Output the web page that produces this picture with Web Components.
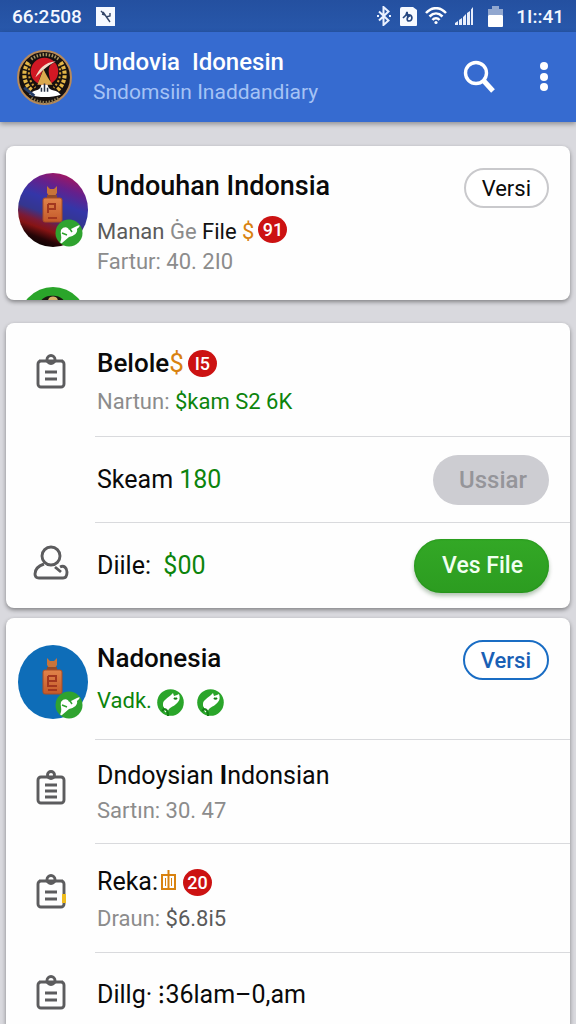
<!DOCTYPE html>
<html lang="id">
<head>
    <meta charset="UTF-8">
    <meta name="viewport" content="width=device-width, initial-scale=1.0">
    <title>Undovia Idonesin</title>
    <style>
        body {
            margin: 0;
            min-height: 100vh;
            display: flex;
            flex-direction: column;
            background: #d9d9de;
            color: #0a0a0a;
            font-family: Roboto, "Liberation Sans", sans-serif;
        }
        main {
            flex: 1;
            display: flex;
            flex-direction: column;
            padding: 24px 6px 0;
        }
        .first { margin-bottom: 23px; }
        .second { margin-bottom: 10px; }
        .last { flex: 1; }
        .gray { color: #8c8c8c; }
        .mid { color: #5a5a5a; }
        .dark { color: #111; }
        .green { color: #0c840c; }
        .orange { color: #d9820f; font-weight: 400; }
    </style>
</head>
<body>
    <status-bar></status-bar>
    <app-header>
        <span slot="title">Undovia&nbsp; Idonesin</span>
        <span slot="subtitle">Sndomsiin Inaddandiary</span>
    </app-header>

    <main>
        <file-card class="first">
            <file-row size="head" tall>
                <round-avatar slot="lead" tone="dusk"></round-avatar>
                <peek-avatar slot="lead"></peek-avatar>
                <span slot="title">Undouhan Indonsia</span>
                <span slot="sub"><span class="mid">Manan</span> <span class="gray">Ġe</span> <span class="dark">File</span> <span class="orange">$</span><count-badge>91</count-badge></span>
                <span slot="sub" class="gray">Fartur: 40. 2I0</span>
                <pill-button slot="action">Versi</pill-button>
            </file-row>
        </file-card>

        <file-card class="second">
            <file-row size="large" strong>
                <line-icon slot="lead" name="clipboard"></line-icon>
                <span slot="title">Belole<span class="orange">$</span><count-badge>I5</count-badge></span>
                <span slot="sub"><span class="gray">Nartun:</span> <span class="green">$kam S2 6K</span></span>
            </file-row>
            <file-row size="single">
                <span slot="title">Skeam <span class="green">180</span></span>
                <pill-button slot="action" kind="muted">Ussiar</pill-button>
            </file-row>
            <file-row size="single">
                <line-icon slot="lead" name="person"></line-icon>
                <span slot="title">Diile:&nbsp; <span class="green">$00</span></span>
                <pill-button slot="action" kind="green">Ves File</pill-button>
            </file-row>
        </file-card>

        <file-card class="last" open-ended>
            <file-row size="head">
                <round-avatar slot="lead" tone="blue"></round-avatar>
                <span slot="title">Nadonesia</span>
                <span slot="sub" class="green">Vadk. <leaf-mark></leaf-mark> <leaf-mark></leaf-mark></span>
                <pill-button slot="action" kind="blue">Versi</pill-button>
            </file-row>
            <file-row size="small">
                <line-icon slot="lead" name="clipboard-full"></line-icon>
                <span slot="title">Dndoysian <b>I</b>ndonsian</span>
                <span slot="sub" class="gray">Sartın: 30. 47</span>
            </file-row>
            <file-row size="medium">
                <line-icon slot="lead" name="clipboard-tag"></line-icon>
                <span slot="title">Reka:<gift-mark></gift-mark><count-badge>20</count-badge></span>
                <span slot="sub"><span class="gray">Draun:</span> <span class="mid">$6.8i5</span></span>
            </file-row>
            <file-row size="end">
                <line-icon slot="lead" name="clipboard"></line-icon>
                <span slot="title">Dillg· ⁝36lam–0,am</span>
            </file-row>
        </file-card>
    </main>

    <!-- Status bar -->
    <template id="status-bar-template">
        <style>
            :host {
                display: flex;
                align-items: center;
                height: 32px;
                padding: 0 12px;
                background: linear-gradient(#2450a0, #2858ab);
                color: #f4f8ff;
                font-size: 19px;
                font-weight: 500;
            }
            svg { display: block; }
            .note { margin-left: 14px; }
            .tray {
                display: flex;
                align-items: center;
                gap: 7px;
                margin-left: auto;
            }
        </style>
        <span>66:2508</span>
        <svg class="note" width="19" height="19" viewBox="0 0 19 19">
            <rect width="19" height="19" fill="#f6f9ff"/>
            <path d="M5 4l2 2M7 5l7 10M6 7l3 1M10 10l4-1v-3" stroke="#334567" stroke-width="1.400" fill="none"/>
        </svg>
        <div class="tray">
            <svg width="16" height="20" viewBox="0 0 16 20" fill="none" stroke="#eaf1ff" stroke-width="2">
                <path d="M3 5.500l9.500 9L7.500 19V1l5 4.500L3 14.500M1 10h2M13 10h2"/>
            </svg>
            <svg width="19" height="19" viewBox="0 0 19 19">
                <path d="M3 0h11l4 3v15a1 1 0 0 1-1 1H2a1 1 0 0 1-1-1V2a2 2 0 0 1 2-2z" fill="#f6f9ff"/>
                <path d="M4 11l3-3 1-3 1 6M9 8c5-1 5 6 1 6-3 0-2-5 1-5" stroke="#24457f" stroke-width="1.700" fill="none"/>
            </svg>
            <svg width="22" height="18" viewBox="0 0 22 18" fill="none" stroke="#fff" stroke-width="2.500">
                <path d="M1 6C7-.500 15-.500 21 6M4.500 9.500c4-4 9-4 13 0M7.500 13c2-2.500 5-2.500 7 0"/>
                <circle cx="11" cy="15.500" r="1.600" fill="#fff" stroke="none"/>
            </svg>
            <svg width="20" height="18" viewBox="0 0 20 18" fill="#e9eefb">
                <path d="M1 18v-2l3-2v4zM5 18v-5l3-2v7zM9 18v-8l3-3v11zM13 18V6l3-2v14zM17 18V2.500L19 0v18z"/>
            </svg>
            <svg width="28" height="21" viewBox="0 0 28 21">
                <path d="M11 0h7v3h4v6H7V3h4z" fill="#91a7cf"/>
                <rect x="7" y="9" width="15" height="12" rx="1" fill="#fff"/>
            </svg>
            <span>1I::41</span>
        </div>
    </template>

    <!-- App header -->
    <template id="app-header-template">
        <style>
            :host {
                display: flex;
                align-items: center;
                height: 90px;
                padding: 0 17px;
                background: #366bd0;
                box-shadow: 0 2px 5px rgba(0, 0, 0, .35);
            }
            .names {
                flex: 1;
                padding-left: 21px;
            }
            h1, p { margin: 0; line-height: 30px; }
            h1 { color: #fff; font-size: 24px; font-weight: 500; }
            p { color: #a5c3f5; font-size: 21px; }
            button {
                display: flex;
                padding: 0;
                border: 0;
                background: none;
            }
            .more { margin-left: 41px; padding-right: 8px; }
        </style>
        <svg width="55" height="57" viewBox="0 0 54 56">
            <circle cx="27" cy="28" r="26" fill="#17110f" stroke="#b98a58" stroke-width="2"/>
            <path d="M14 10C22 4 33 4 41 10" fill="none" stroke="#a99561" stroke-width="3" stroke-dasharray="1.500 1.500"/>
            <path d="M14 48C22 54 33 54 41 48" fill="none" stroke="#8c7a52" stroke-width="3" stroke-dasharray="1.500 1.500"/>
            <circle cx="27" cy="22" r="13.500" fill="#d11824"/>
            <path d="M17 27C24 22 25 13 38 13 30 15 30 21 33 32L21 32 26 19z" fill="#17110f"/>
            <path d="M38 12C27 13 21 20 18 28 24 22 29 17 38 12z" fill="#f3ddc8"/>
            <path d="M26 20l-6 15h15C31 30 29 26 26 20z" fill="#dba94e"/>
            <g fill="none" stroke="#e4b748" stroke-width="4" stroke-dasharray="3 1.500">
                <path d="M11 13C5 22 6 34 15 41"/>
                <path d="M43 13C49 22 48 34 39 41"/>
            </g>
            <path d="M13 15C10 24 12 32 18 38M41 15C44 24 42 32 36 38" fill="none" stroke="#d39b34" stroke-width="2" stroke-dasharray="2 2"/>
            <path d="M12 45C17 38 22 43 24 35h6c2 8 8 3 13 10-9 3-22 3-31 0z" fill="#fff"/>
            <path d="M27 34v8M24 38v4M30 38v4" stroke="#283245" stroke-width="1.500"/>
            <path d="M7 38l10 8" stroke="#253c66" stroke-width="3"/>
        </svg>
        <div class="names">
            <h1><slot name="title"></slot></h1>
            <p><slot name="subtitle"></slot></p>
        </div>
        <button aria-label="Cari">
            <svg width="33" height="34" viewBox="0 0 33 34" fill="none" stroke="#fff">
                <circle cx="13" cy="13" r="10.500" stroke-width="3.400"/>
                <path d="M20 20l10 11" stroke-width="5"/>
            </svg>
        </button>
        <button class="more" aria-label="Menu">
            <svg width="14" height="30" viewBox="0 0 14 30" fill="#fff">
                <circle cx="7" cy="4" r="4"/><circle cx="7" cy="15" r="4"/><circle cx="7" cy="25" r="4"/>
            </svg>
        </button>
    </template>

    <!-- Card -->
    <template id="file-card-template">
        <style>
            :host {
                display: block;
                overflow: hidden;
                border-radius: 8px;
                background: #fefefe;
                box-shadow: 0 2px 4px rgba(0, 0, 0, .4);
            }
            :host([open-ended]) { border-radius: 8px 8px 0 0; }
        </style>
        <slot></slot>
    </template>

    <!-- Row inside a card -->
    <template id="file-row-template">
        <style>
            :host {
                --top: 20px;
                --gap: 4px;
                --bottom: 18px;
                display: flex;
            }
            :host([size="small"]) { --top: 18px; --gap: 2px; --bottom: 17px; }
            :host([size="large"]) { --top: 22px; --gap: 6px; --bottom: 19px; }
            :host([size="head"]) { --top: 22px; --gap: 10px; --bottom: 23px; }
            :host([size="head"][tall]) { --gap: 12px; }
            :host([size="single"]) { --top: 25px; --bottom: 24px; }
            :host([size="end"]) { --top: 24px; --bottom: 12px; }
            .lead {
                width: 89px;
                flex: none;
                display: flex;
                flex-direction: column;
                align-items: center;
                padding-top: 31px;
                box-sizing: border-box;
            }
            :host([size="head"]) .lead {
                padding: 27px 0 0 4px;
                justify-content: space-between;
            }
            :host([size="single"]) .lead,
            :host([size="end"]) .lead { padding-top: 23px; }
            .body {
                flex: 1;
                display: flex;
                padding: 0 21px 0 2px;
                border-top: 1px solid #d9dadd;
            }
            :host(:first-child) .body { border-top: 0; }
            .text {
                flex: 1;
                padding: var(--top) 0 var(--bottom);
            }
            .title {
                margin: 0;
                font-size: 25px;
                font-weight: 400;
                line-height: 36px;
            }
            :host([size="head"]) .title,
            :host([strong]) .title { font-size: 26px; font-weight: 500; }
            :host([size="head"][tall]) .title { font-size: 27px; }
            .sub {
                display: flex;
                flex-direction: column;
                margin-top: var(--gap);
                font-size: 22px;
                line-height: 30px;
            }
            :host([size="single"]) .sub,
            :host([size="end"]) .sub { display: none; }
            .action { display: flex; align-items: center; }
            :host([size="head"]) .action {
                align-items: flex-start;
                padding-top: 22px;
            }
        </style>
        <div class="lead"><slot name="lead"></slot></div>
        <div class="body">
            <div class="text">
                <h2 class="title"><slot name="title"></slot></h2>
                <div class="sub"><slot name="sub"></slot></div>
            </div>
            <div class="action"><slot name="action"></slot></div>
        </div>
    </template>

    <!-- Pill button -->
    <template id="pill-button-template">
        <style>
            :host { display: block; }
            button {
                display: block;
                height: 40px;
                padding: 0 16px;
                border: 2px solid #c9c9cc;
                border-radius: 27px;
                background: #fff;
                color: #0a0a0a;
                font: 400 22px Roboto, "Liberation Sans", sans-serif;
            }
            :host([kind="blue"]) button {
                border-color: #1a6dc4;
                color: #1960b5;
                font-weight: 500;
            }
            :host([kind="muted"]) button {
                height: 50px;
                padding: 0 22px 0 26px;
                border: 0;
                background: #cdcdd2;
                color: #95959a;
                font-size: 24px;
                font-weight: 500;
            }
            :host([kind="green"]) button {
                height: 54px;
                padding: 0 26px 0 28px;
                border: 0;
                background: linear-gradient(#33a826, #2c9c20);
                box-shadow: inset 0 0 2px #17800f, 0 3px 4px rgba(0, 60, 0, .3);
                color: #f1fff0;
                font-size: 23px;
                font-weight: 500;
            }
        </style>
        <button><slot></slot></button>
    </template>

    <!-- Red counter -->
    <template id="count-badge-template">
        <style>
            :host {
                display: inline-flex;
                align-items: center;
                justify-content: center;
                width: 29px;
                height: 27px;
                margin-left: 4px;
                border-radius: 50%;
                background: #cc1212;
                color: #fff;
                font-size: 18px;
                font-weight: 500;
                line-height: 27px;
                vertical-align: bottom;
                margin-bottom: 4px;
            }
        </style>
        <slot></slot>
    </template>

    <!-- Avatar with a bottle and a small green badge -->
    <template id="round-avatar-template">
        <style>
            :host { display: block; height: 74px; }
            svg { display: block; }
            .dusk, :host([tone="dusk"]) .blue { display: none; }
            :host([tone="dusk"]) .dusk { display: inline; }
        </style>
        <svg width="70" height="74" viewBox="0 0 70 74">
            <defs>
                <linearGradient id="sky" x1=".700" y1="0" x2=".350" y2="1">
                    <stop offset="0" stop-color="#a8155c"/>
                    <stop offset=".200" stop-color="#65208c"/>
                    <stop offset=".400" stop-color="#3436a8"/>
                    <stop offset=".580" stop-color="#34368f"/>
                    <stop offset=".700" stop-color="#7c1a35"/>
                    <stop offset=".780" stop-color="#861414"/>
                    <stop offset=".900" stop-color="#260507"/>
                    <stop offset="1" stop-color="#0a0203"/>
                </linearGradient>
                <linearGradient id="clay" x1="0" y1="0" x2="0" y2="1">
                    <stop offset="0" stop-color="#e0834a"/>
                    <stop offset="1" stop-color="#c45a2a"/>
                </linearGradient>
            </defs>
            <ellipse class="dusk" cx="35" cy="37" rx="35" ry="37" fill="url(#sky)"/>
            <ellipse class="blue" cx="35" cy="37" rx="35" ry="37" fill="#0e6db8"/>
            <path d="M29 13l3 3h4l3-3v7l-2 3H31l-2-3z" fill="#c8743a"/>
            <rect x="29" y="22" width="10" height="3" fill="#8f4a2a"/>
            <rect x="25" y="25" width="19" height="24" rx="2" fill="url(#clay)" stroke="#a84c25"/>
            <path class="dusk" d="M30 31h7v5h-6M30 31v9M30 45h9" fill="none" stroke="#a3371f" stroke-width="2"/>
            <path class="blue" d="M30 31h8v5h-8v5h9M30 31v10M30 45h9" fill="none" stroke="#a3371f" stroke-width="2"/>
            <circle cx="51" cy="60" r="13.500" fill="#2fa32f"/>
            <path d="M43 57c3-4 7-3 8 0l8-4c4-2 3 1 0 3 1 4-3 7-8 8l-7 6c-2 1-2-1-1-3 1-3-1-7 0-10z" fill="#fff"/>
            <path d="M44 60l5 2M52 56l2 3" stroke="#2fa32f" stroke-width="1.500"/>
        </svg>
    </template>

    <!-- Top slice of the next avatar -->
    <template id="peek-avatar-template">
        <style>
            :host {
                display: block;
                height: 13px;
                overflow: hidden;
            }
        </style>
        <svg width="70" height="74" viewBox="0 0 70 74">
            <ellipse cx="35" cy="37" rx="35" ry="37" fill="#2aa52a"/>
            <path d="M23 14C26 7 43 7 46 14z" fill="#1c1711"/>
            <path d="M30 14c0-6 10-6 10 0z" fill="#d8b36a"/>
        </svg>
    </template>

    <!-- Green animal mark -->
    <template id="leaf-mark-template">
        <style>
            :host {
                display: inline-block;
                margin-right: 7px;
                vertical-align: middle;
            }
            svg { display: block; }
        </style>
        <svg width="27" height="27" viewBox="0 0 27 27">
            <circle cx="13.500" cy="13.500" r="13.300" fill="#2aa52a"/>
            <path d="M6 15c0-4 5-6 8-9l2-2 1 3 3-1 2-1c1 3 1 6-1 8-3 4-6 4-9 7-1 2-3 4-4 3-1-2-1-3-1-5-1 0-1-1-1-3z" fill="#fff"/>
            <path d="M11 27c0-5-1-7-4-7l-2 2M17 9c1 1 2 1 3 0" fill="none" stroke="#158015" stroke-width="2"/>
        </svg>
    </template>

    <!-- Orange parcel mark -->
    <template id="gift-mark-template">
        <style>
            :host { display: inline-block; margin: 0 3px; }
            svg { display: block; }
        </style>
        <svg width="15" height="21" viewBox="0 0 15 21" fill="none" stroke="#d9820f" stroke-width="2">
            <path d="M1 6h13v14H1zM7.500 1v19"/>
            <path d="M4.500 9v8M10.500 9v8" stroke-width="1"/>
        </svg>
    </template>

    <script>
        // Builds an element class that clones its template into a shadow root
        function defineFromTemplate(name) {
            customElements.define(name, class extends HTMLElement {
                constructor() {
                    super();
                    this.attachShadow({ mode: 'open' });
                }

                connectedCallback() {
                    const template = document.getElementById(`${name}-template`);
                    this.shadowRoot.replaceChildren(template.content.cloneNode(true));
                }
            });
        }

        const icons = {
            'clipboard': '<path d="M11 7H5a3 3 0 0 0-3 3v20a3 3 0 0 0 3 3h20a3 3 0 0 0 3-3V10a3 3 0 0 0-3-3h-6M3 7h24"/><circle cx="15" cy="5.500" r="4"/><path d="M9 18h12M9 25h12"/>',
            'clipboard-full': '<path d="M5 7h20a3 3 0 0 1 3 3v20a3 3 0 0 1-3 3H5a3 3 0 0 1-3-3V10a3 3 0 0 1 3-3zM10 7h10"/><circle cx="15" cy="5" r="3.500"/><path d="M9 15h12M9 21h12M9 27h12"/>',
            'person': '<circle cx="16" cy="11" r="9"/><path d="M9 19C3 21 0 24 0 29c0 3 2 4 4 4h24c3 0 4-3 4-6 0-4-3-7-7-5M20 22l6 5"/>'
        };
        icons['clipboard-tag'] = icons['clipboard'] + '<path d="M28 20v9" stroke="#f0bd1e" stroke-width="4"/>';

        // Outlined icon picked by name
        class LineIcon extends HTMLElement {
            constructor() {
                super();
                this.attachShadow({ mode: 'open' });
            }

            connectedCallback() {
                const name = this.getAttribute('name');
                const box = name === 'person' ? '-2 0 36 35' : '0 0 30 35';
                const width = name === 'person' ? 36 : 30;
                this.shadowRoot.innerHTML = `
                    <style>
                        :host { display: block; }
                        svg { display: block; }
                    </style>
                    <svg width="${width}" height="35" viewBox="${box}" fill="none" stroke="#5c5c5e" stroke-width="2.900">${icons[name]}</svg>`;
            }
        }

        // Define custom elements
        customElements.define('line-icon', LineIcon);
        [
            'status-bar', 'app-header', 'file-card', 'file-row', 'pill-button', 'count-badge',
            'round-avatar', 'peek-avatar', 'leaf-mark', 'gift-mark'
        ].forEach(defineFromTemplate);
    </script>
</body>
</html>
